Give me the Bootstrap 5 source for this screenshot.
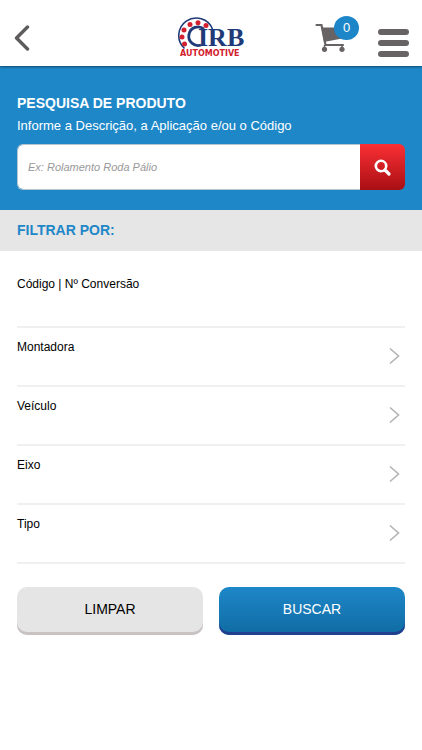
<!DOCTYPE html>
<html lang="pt-BR">
<head>
<meta charset="utf-8">
<meta name="viewport" content="width=device-width, initial-scale=1">
<title>IRB Automotive - Pesquisa de Produto</title>
<link href="https://cdn.jsdelivr.net/npm/bootstrap@5.3.0/dist/css/bootstrap.min.css" rel="stylesheet">
<style>
body { font-family: "Liberation Sans", Arial, sans-serif; color: #000; background: #fff; }
.gutter { padding-left: 17px; padding-right: 17px; }
.top-bar { height: 66px; box-shadow: 0 1px 2px rgba(0,0,0,.45); z-index: 2; padding: 0 13px; }
.top-side { flex: 1 1 0; }
.top-tools { gap: 30px; padding-top: 14px; }
.cart-count { width: 25px; height: 24px; left: 19px; top: -7px; background: #1c86c8; color: #fff; font-size: 13px; line-height: 24px; }
.menu-toggle { padding-top: 5px; }
.search-zone { background: #1e87c8; color: #fff; padding-top: 27px; padding-bottom: 20px; }
.search-zone h1 { font-size: 14px; line-height: 20px; font-weight: 700; margin-bottom: 4px; }
.search-zone label { font-size: 13px; line-height: 18px; margin-bottom: 9px; }
.search-zone .form-control { height: 46px; border: 1px solid #b5c5d0; border-right: 0; border-radius: 6px; font-size: 11px; padding: 0 10px; }
.search-zone .form-control::placeholder { color: #999; font-style: italic; }
.btn-find { width: 45px; border: 0; border-radius: 6px; background: linear-gradient(#fb3035, #a80f14); }
.filter-title { background: #e6e6e6; color: #1e87c8; font-size: 14px; line-height: 20px; font-weight: 700; padding-top: 10px; padding-bottom: 11px; }
.filter-code { height: 77px; padding-top: 24px; border-bottom: 2px solid #f0f0f0; font-size: 12px; line-height: 18px; }
.filter-code input { height: 30px; outline: 0; }
.filter-row { height: 59px; border-bottom: 2px solid #f0f0f0; font-size: 12px; line-height: 18px; padding: 10px 5px 0 0; }
.filter-row svg { margin-top: 9px; }
.action-row { padding-top: 23px; }
.btn-act { height: 48px; border: 0; border-radius: 10px; font-size: 14px; padding: 0 0 3px; }
.btn-clear { background: #e5e5e5; color: #000; box-shadow: inset 0 -3px #c8c2c3; }
.btn-go { background: linear-gradient(#1e87c8, #106ba3); color: #fff; box-shadow: inset 0 -3px #21408f; }
</style>
<script src="https://cdn.jsdelivr.net/npm/bootstrap@5.3.0/dist/js/bootstrap.bundle.min.js"></script>
</head>
<body>
<header class="top-bar d-flex align-items-center bg-white position-relative">
  <div class="top-side d-flex">
    <a href="#" aria-label="Voltar" class="d-flex mt-2 pt-1">
      <svg width="18" height="28" viewBox="0 0 18 28" fill="none" stroke="#5d5b5c" stroke-width="3.4" stroke-linecap="round" stroke-linejoin="round"><path d="M14.5 2 3.500 13l11 11"/></svg>
    </a>
  </div>
  <a href="#" aria-label="IRB Automotive" class="d-flex mt-2">
    <svg width="70" height="40" viewBox="0 0 70 40">
      <path d="M8.500 31.500A17.500 17.500 0 1 1 36.500 12" fill="none" stroke="#203a78" stroke-width="1.600"/>
      <path d="M28 12A9.300 9.300 0 1 0 25 28" fill="none" stroke="#203a78" stroke-width="2.800"/>
      <g fill="#d3202e"><circle cx="8.500" cy="27" r="2.500"/><circle cx="6" cy="20" r="2.500"/><circle cx="8" cy="13" r="2.500"/><circle cx="14" cy="7.500" r="2.500"/><circle cx="22" cy="5.700" r="2.500"/><circle cx="30" cy="8.500" r="2.500"/></g>
      <text x="22" y="29" font-family="Liberation Serif, serif" font-weight="700" font-size="26" fill="#203a78">IRB</text>
      <text x="4" y="39" font-family="DejaVu Sans, sans-serif" font-weight="700" font-size="8" fill="#d3202e">AUTOMOTIVE</text>
    </svg>
  </a>
  <div class="top-side top-tools d-flex justify-content-end align-items-start">
    <a href="#" aria-label="Carrinho" class="position-relative d-flex text-decoration-none">
      <svg width="32" height="30" viewBox="0 0 32 30"><path d="M1.500 2h5l4 20h17.500" fill="none" stroke="#676364" stroke-width="2.200" stroke-linecap="round"/><path d="M6.500 4.500H30l-3 11-18 3.500z" fill="#676364"/><path d="M9.500 22v4M27 22v4" stroke="#676364" stroke-width="1.500"/><circle cx="9.500" cy="26.300" r="2.600" fill="#676364"/><circle cx="27" cy="26.300" r="2.600" fill="#676364"/></svg>
      <span class="cart-count position-absolute rounded-circle text-center">0</span>
    </a>
    <button type="button" class="btn menu-toggle px-0 pb-0 border-0 d-flex" aria-label="Menu">
      <svg width="32" height="30" viewBox="0 0 32 30" stroke="#676364" stroke-width="6" stroke-linecap="round"><path d="M4 4h25M4 15h25M4 26h25"/></svg>
    </button>
  </div>
</header>
<main>
  <form class="search-zone gutter">
    <h1>PESQUISA DE PRODUTO</h1>
    <label for="busca" class="d-block">Informe a Descrição, a Aplicação e/ou o Código</label>
    <div class="input-group">
      <input id="busca" type="text" class="form-control" placeholder="Ex: Rolamento Roda Pálio">
      <button type="submit" class="btn btn-find p-0" aria-label="Pesquisar">
        <svg width="18" height="18" viewBox="0 0 18 18" fill="none" stroke="#fff"><circle cx="7" cy="7" r="5.200" stroke-width="2.600"/><path d="m11 11 4 4" stroke-width="3.200" stroke-linecap="round"/></svg>
      </button>
    </div>
  </form>
  <h2 class="filter-title gutter mb-0">FILTRAR POR:</h2>
  <form class="gutter">
    <div class="filter-code">
      <label for="codigo" class="d-block">Código | Nº Conversão</label>
      <input id="codigo" type="text" class="w-100 border-0 bg-transparent p-0">
    </div>
    <button type="button" class="btn filter-row w-100 rounded-0 border-top-0 border-start-0 border-end-0 d-flex justify-content-between align-items-start text-start text-black">Montadora<svg width="12" height="18" viewBox="0 0 12 18" fill="none" stroke="#b3b3b3" stroke-width="1.600"><path d="m2 1.500 8.500 7.500-8.500 7.500"/></svg></button>
    <button type="button" class="btn filter-row w-100 rounded-0 border-top-0 border-start-0 border-end-0 d-flex justify-content-between align-items-start text-start text-black">Veículo<svg width="12" height="18" viewBox="0 0 12 18" fill="none" stroke="#b3b3b3" stroke-width="1.600"><path d="m2 1.500 8.500 7.500-8.500 7.500"/></svg></button>
    <button type="button" class="btn filter-row w-100 rounded-0 border-top-0 border-start-0 border-end-0 d-flex justify-content-between align-items-start text-start text-black">Eixo<svg width="12" height="18" viewBox="0 0 12 18" fill="none" stroke="#b3b3b3" stroke-width="1.600"><path d="m2 1.500 8.500 7.500-8.500 7.500"/></svg></button>
    <button type="button" class="btn filter-row w-100 rounded-0 border-top-0 border-start-0 border-end-0 d-flex justify-content-between align-items-start text-start text-black">Tipo<svg width="12" height="18" viewBox="0 0 12 18" fill="none" stroke="#b3b3b3" stroke-width="1.600"><path d="m2 1.500 8.500 7.500-8.500 7.500"/></svg></button>
    <div class="action-row row gx-3">
      <div class="col"><button type="reset" class="btn btn-act btn-clear w-100">LIMPAR</button></div>
      <div class="col"><button type="submit" class="btn btn-act btn-go w-100">BUSCAR</button></div>
    </div>
  </form>
</main>
</body>
</html>
